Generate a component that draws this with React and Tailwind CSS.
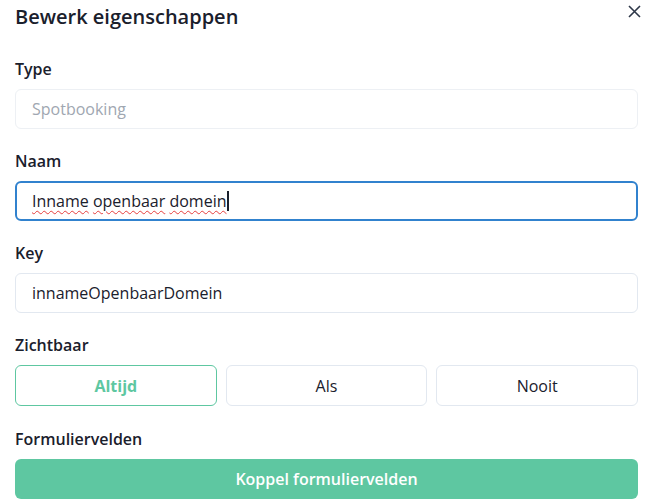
import React from "react";

export default function App() {
  const font = { fontFamily: '"Open Sans", sans-serif' };
  return (
    <div className="w-[653px] h-[501px] bg-white overflow-hidden relative text-[#1a202c]" style={font}>
      <button className="absolute right-[12px] top-[4px] w-[14px] h-[14px] flex items-center justify-center text-[#2d3748]">
        <svg width="13" height="13" viewBox="0 0 13 13" fill="none" stroke="currentColor" strokeWidth="1.6">
          <path d="M1 1L12 12M12 1L1 12" />
        </svg>
      </button>
      <div className="px-[15px] pt-[3px]">
        <h1 className="text-[20px] leading-[28px] font-semibold text-[#1a202c]">Bewerk eigenschappen</h1>

        <div className="mt-[26px]">
          <div className="text-[16px] leading-[24px] font-semibold">Type</div>
          <div className="mt-2 h-[40px] w-[623px] rounded-[6px] border border-[#edf0f4] px-4 flex items-center text-[16px] text-[#a0a7b1]">
            Spotbooking
          </div>
        </div>

        <div className="mt-[20px]">
          <div className="text-[16px] leading-[24px] font-semibold">Naam</div>
          <div className="mt-2 h-[40px] w-[623px] rounded-[6px] border-2 border-[#3182ce] px-[15px] flex items-center text-[16px] text-[#1a202c]">
            <span className="underline decoration-wavy decoration-[#e53e3e] decoration-1 underline-offset-[3px]">Inname</span>
            <span>&nbsp;</span>
            <span className="underline decoration-wavy decoration-[#e53e3e] decoration-1 underline-offset-[3px]">openbaar</span>
            <span>&nbsp;</span>
            <span className="underline decoration-wavy decoration-[#e53e3e] decoration-1 underline-offset-[3px]">domein</span>
            <span className="inline-block ml-[1px] w-[2px] h-[20px] bg-[#1a202c]"></span>
          </div>
        </div>

        <div className="mt-[20px]">
          <div className="text-[16px] leading-[24px] font-semibold">Key</div>
          <div className="mt-2 h-[40px] w-[623px] rounded-[6px] border border-[#e2e8f0] px-4 flex items-center text-[16px] text-[#1a202c]">
            innameOpenbaarDomein
          </div>
        </div>

        <div className="mt-[20px]">
          <div className="text-[16px] leading-[24px] font-semibold">Zichtbaar</div>
          <div className="mt-2 w-[623px] grid grid-cols-3 gap-[9px]">
            <div className="h-[41px] rounded-[6px] border border-[#5ec7a1] flex items-center justify-center text-[16px] font-bold text-[#5ec7a1]">Altijd</div>
            <div className="h-[41px] rounded-[6px] border border-[#e2e8f0] flex items-center justify-center text-[16px]">Als</div>
            <div className="h-[41px] rounded-[6px] border border-[#e2e8f0] flex items-center justify-center text-[16px]">Nooit</div>
          </div>
        </div>

        <div className="mt-[21px]">
          <div className="text-[16px] leading-[24px] font-semibold">Formuliervelden</div>
          <div className="mt-2 h-[40px] w-[623px] rounded-[6px] bg-[#5ec7a1] flex items-center justify-center text-[16px] font-semibold text-white">
            Koppel formuliervelden
          </div>
        </div>
      </div>
    </div>
  );
}
